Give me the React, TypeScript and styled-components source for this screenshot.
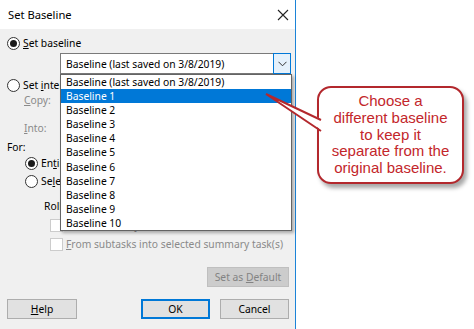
import styled, { createGlobalStyle } from 'styled-components';

const GlobalStyle = createGlobalStyle`
  html, body {
    margin: 0;
    padding: 0;
    background: #ffffff;
  }
  body {
    width: 474px;
    height: 329px;
    overflow: hidden;
    font-family: "Noto Sans", "DejaVu Sans", sans-serif;
  }
`;

const Page = styled.div`
  position: relative;
  width: 474px;
  height: 329px;
  background: #ffffff;
`;

const Dialog = styled.div`
  position: relative;
  width: 295px;
  height: 329px;
  border-right: 1px solid #1c84d8;
  display: flex;
  flex-direction: column;
  font-size: 10.3px;
  color: #000;
`;

const TitleBar = styled.div`
  height: 29px;
  flex: none;
  background: #fff;
  display: flex;
  align-items: center;
  justify-content: space-between;
  padding: 0 6px 0 8px;
  font-size: 11.2px;
`;

const Body = styled.div`
  flex: 1;
  background: #f0f0f0;
  display: flex;
  flex-direction: column;
  padding-left: 7px;
  padding-right: 6px;
`;

const Row = styled.div<{ $top: number; $h: number; $indent?: number }>`
  display: flex;
  align-items: center;
  gap: 3px;
  height: ${(p) => p.$h}px;
  margin-top: ${(p) => p.$top}px;
  margin-left: ${(p) => p.$indent ?? 0}px;
  white-space: nowrap;
`;

const Radio = styled.span<{ $checked?: boolean }>`
  flex: none;
  width: 13px;
  height: 13px;
  box-sizing: border-box;
  border-radius: 50%;
  border: 1px solid #333;
  background: #fff;
  display: flex;
  align-items: center;
  justify-content: center;
  &::after {
    content: '';
    display: ${(p) => (p.$checked ? 'block' : 'none')};
    width: 7px;
    height: 7px;
    border-radius: 50%;
    background: #1a1a1a;
  }
`;

const Check = styled.span`
  flex: none;
  width: 13px;
  height: 13px;
  box-sizing: border-box;
  border: 1px solid #cccccc;
  background: #fff;
`;

const Label = styled.span<{ $disabled?: boolean }>`
  color: ${(p) => (p.$disabled ? '#8a8a8a' : '#000')};
`;

const Key = styled.u`
  text-decoration-thickness: 1px;
  text-underline-offset: 1px;
`;

const Combo = styled.div`
  margin-left: 53px;
  margin-top: 1px;
  width: 231px;
  height: 21px;
  box-sizing: border-box;
  border: 1px solid #7a7a7a;
  background: #fff;
  display: flex;
  align-items: stretch;
`;

const ComboText = styled.span`
  flex: 1;
  padding-left: 5px;
  display: flex;
  align-items: center;
`;

const ComboArrow = styled.span`
  width: 16px;
  border: 1px solid #0078d7;
  margin: -1px -1px -1px 0;
  background: #e5f1fb;
  display: flex;
  align-items: center;
  justify-content: center;
`;

const DropList = styled.div`
  position: absolute;
  left: 60px;
  top: 74px;
  width: 232px;
  box-sizing: border-box;
  border: 1px solid #646464;
  background: #fff;
  box-shadow: 2px 2px 3px rgba(0, 0, 0, 0.3);
  z-index: 2;
`;

const DropItem = styled.div<{ $selected?: boolean }>`
  height: 14.1px;
  line-height: 14.1px;
  padding-left: 5px;
  background: ${(p) => (p.$selected ? '#0078d7' : 'transparent')};
  color: ${(p) => (p.$selected ? '#fff' : '#000')};
  white-space: nowrap;
`;

const ButtonRow = styled.div<{ $top: number }>`
  display: flex;
  align-items: center;
  margin-top: ${(p) => p.$top}px;
  height: 20px;
`;

const Button = styled.div<{ $variant?: 'default' | 'primary' | 'disabled'; $w: number; $ml?: number }>`
  width: ${(p) => p.$w}px;
  height: 20px;
  margin-left: ${(p) => p.$ml ?? 0}px;
  box-sizing: border-box;
  display: flex;
  align-items: center;
  justify-content: center;
  background: ${(p) => (p.$variant === 'disabled' ? '#cccccc' : '#e1e1e1')};
  border: ${(p) =>
    p.$variant === 'primary' ? '2px solid #0078d7' : p.$variant === 'disabled' ? '1px solid #bfbfbf' : '1px solid #adadad'};
  color: ${(p) => (p.$variant === 'disabled' ? '#838383' : '#000')};
`;

const Callout = styled.div`
  position: absolute;
  left: 317px;
  top: 86px;
  width: 147px;
  height: 98px;
  box-sizing: border-box;
  border: 2px solid #b3282d;
  border-radius: 14px;
  background: #ffffff;
  box-shadow: 3px 4px 4px rgba(0, 0, 0, 0.35);
  display: flex;
  align-items: center;
  justify-content: center;
  text-align: center;
  font-family: "Liberation Sans", Arial, sans-serif;
  font-size: 15px;
  line-height: 16.75px;
  color: #c3262b;
  z-index: 3;
`;

const Pointer = styled.svg`
  position: absolute;
  left: -56px;
  top: 4px;
  overflow: visible;
`;

const items = [
  'Baseline (last saved on 3/8/2019)',
  'Baseline 1',
  'Baseline 2',
  'Baseline 3',
  'Baseline 4',
  'Baseline 5',
  'Baseline 6',
  'Baseline 7',
  'Baseline 8',
  'Baseline 9',
  'Baseline 10',
];

export default function App() {
  return (
    <Page>
      <GlobalStyle />
      <Dialog>
        <TitleBar>
          <span>Set Baseline</span>
          <svg width="12" height="12" viewBox="0 0 12 12">
            <path d="M1 1 L11 11 M11 1 L1 11" stroke="#222" strokeWidth="1.1" />
          </svg>
        </TitleBar>
        <Body>
          <Row $top={5} $h={18}>
            <Radio $checked />
            <Label>
              <Key>S</Key>et baseline
            </Label>
          </Row>
          <Combo>
            <ComboText>Baseline (last saved on 3/8/2019)</ComboText>
            <ComboArrow>
              <svg width="9" height="6" viewBox="0 0 9 6">
                <path d="M0.5 0.8 L4.5 4.8 L8.5 0.8" fill="none" stroke="#333" strokeWidth="1" />
              </svg>
            </ComboArrow>
          </Combo>
          <Row $top={2} $h={18}>
            <Radio />
            <Label>
              Set <Key>i</Key>nterim plan
            </Label>
          </Row>
          <Row $top={-1} $h={14} $indent={17}>
            <Label $disabled>
              <Key>C</Key>opy:
            </Label>
          </Row>
          <Row $top={14} $h={14} $indent={17}>
            <Label $disabled>
              <Key>I</Key>nto:
            </Label>
          </Row>
          <Row $top={5} $h={14}>
            <Label>For:</Label>
          </Row>
          <Row $top={2} $h={14} $indent={18}>
            <Radio $checked />
            <Label>
              En<Key>t</Key>ire project
            </Label>
          </Row>
          <Row $top={4} $h={14} $indent={18}>
            <Radio />
            <Label>
              Se<Key>l</Key>ected tasks
            </Label>
          </Row>
          <Row $top={11} $h={14} $indent={37}>
            <Label>Roll up baselines:</Label>
          </Row>
          <Row $top={5} $h={14} $indent={43}>
            <Check />
            <Label $disabled>
              T<Key>o</Key> all summary tasks
            </Label>
          </Row>
          <Row $top={5} $h={14} $indent={43}>
            <Check />
            <Label $disabled>
              <Key>F</Key>rom subtasks into selected summary task(s)
            </Label>
          </Row>
          <ButtonRow $top={16}>
            <Button $variant="disabled" $w={82} $ml={200}>
              <span>
                Set as <Key>D</Key>efault
              </span>
            </Button>
          </ButtonRow>
          <ButtonRow $top={12}>
            <Button $w={70} $ml={0}>
              <span>
                <Key>H</Key>elp
              </span>
            </Button>
            <Button $variant="primary" $w={69} $ml={64}>
              OK
            </Button>
            <Button $w={69} $ml={10}>
              Cancel
            </Button>
          </ButtonRow>
        </Body>
        <DropList>
          {items.map((it, i) => (
            <DropItem key={it} $selected={i === 1}>
              {it}
            </DropItem>
          ))}
        </DropList>
      </Dialog>
      <Callout>
        <Pointer width="60" height="40" viewBox="0 0 60 40">
          <polygon points="3,2 60,28 60,39" fill="#ffffff" />
          <path d="M3 2 L58 28 M3 2 L58 39" stroke="#b3282d" strokeWidth="2" fill="none" />
        </Pointer>
        <div>
          Choose a<br />
          different baseline
          <br />
          to keep it
          <br />
          separate from the
          <br />
          original baseline.
        </div>
      </Callout>
    </Page>
  );
}
